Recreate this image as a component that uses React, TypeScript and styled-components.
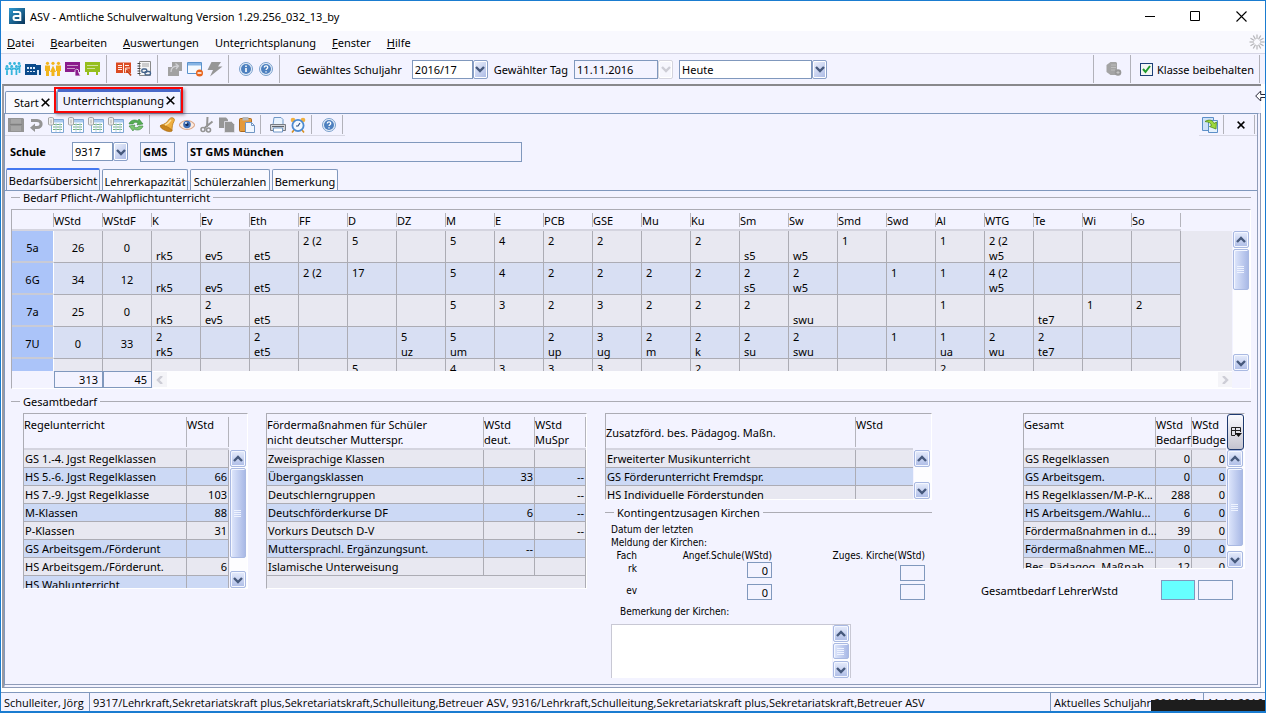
import React from 'react';
import styled, { createGlobalStyle, css } from 'styled-components';

const slate = '#8098bd';
const grid = '#acacb4';
const paper = '#f3f3ff';

const GlobalStyle = createGlobalStyle`
  *, *::before, *::after { box-sizing: border-box; }
  body { margin: 0; background: #fff; }
  body, button, input, select, textarea {
    font-family: "Noto Sans", "Open Sans", "Liberation Sans", sans-serif;
    font-size: 11px;
    color: #000;
  }
  button, input, select, textarea { margin: 0; padding: 0; border-radius: 0; }
  svg { display: block; flex: none; }
`;

/* ---------- window frame ---------- */

const Window = styled.div`
  position: relative;
  display: flex;
  flex-direction: column;
  min-height: 100vh;
  border: 1px solid #1a7cd0;
  border-bottom-width: 2px;
  background: #fff;
  line-height: 15px;
  white-space: nowrap;
  overflow: hidden;
`;

const TitleBar = styled.header`
  display: flex;
  align-items: center;
  height: 30px;
  padding: 0 16px 0 8px;
`;

const AppTitle = styled.h1`
  margin: 0 auto 0 5px;
  font-size: 11px;
  font-weight: 400;
`;

const WindowButton = styled.button`
  display: grid;
  place-items: center;
  width: 45px;
  height: 28px;
  border: 0;
  background: none;
  &:last-child { width: 16px; margin-left: 15px; }
`;

const MenuBar = styled.nav`
  display: flex;
  align-items: center;
  gap: 16px;
  height: 23px;
  padding: 0 0 0 6px;
  background: #f9f9fe;
  border-bottom: 1px solid #d6d6e6;
`;

const MenuItem = styled.a`
  color: #000;
  text-decoration: none;
`;

const Busy = styled.span`
  margin-left: auto;
`;

/* ---------- tool bars ---------- */

const Divider = styled.span<{ $tall?: boolean }>`
  width: 1px;
  height: ${p => (p.$tall ? 28 : 19)}px;
  margin: 0 7px 0 3px;
  background: #b2b2ba;
  &:last-child { margin-right: 2px; }
`;

const ToolBar = styled.div`
  display: flex;
  align-items: center;
  height: 30px;
  padding: 0 3px 0 2px;
  background: ${paper};
`;

const PageBar = styled.div`
  display: flex;
  justify-content: space-between;
`;

const PageTools = styled.div`
  display: flex;
  align-items: center;
  height: 22px;
  padding: 0 0 0 1px;
  border-bottom: 1px solid #d8d8e4;
`;

const ToolButton = styled.button<{ $wide?: boolean }>`
  display: grid;
  place-items: center;
  width: ${p => (p.$wide ? 26 : 20)}px;
  height: 20px;
  border: 0;
  background: none;
`;

const Push = styled.span`
  flex: 1;
`;

const FieldLabel = styled.label<{ $lead?: boolean }>`
  margin: 0 ${p => (p.$lead ? 10 : 6)}px;
`;

const Combo = styled.span<{ $w: number; $gap?: number }>`
  display: flex;
  width: ${p => p.$w}px;
  height: 19px;
  margin-right: ${p => p.$gap ?? 0}px;
`;

const ComboSelect = styled.select`
  flex: 1;
  min-width: 0;
  appearance: none;
  padding: 0 2px;
  border: 1px solid ${slate};
  background: #fff;
`;

const ComboInput = styled.input`
  flex: 1;
  min-width: 0;
  padding: 0 2px;
  border: 1px solid ${slate};
  background: ${paper};
`;

const ComboArrow = styled.button<{ $off?: boolean }>`
  display: grid;
  place-items: center;
  width: 15px;
  border: 1px solid ${p => (p.$off ? '#d4d4de' : '#8aa0c8')};
  border-radius: 2px;
  background: ${p => (p.$off ? '#f6f6fd' : 'linear-gradient(135deg, #eef2fd, #a9b8e4)')};
  box-shadow: inset 0 0 0 1px #fff;
`;

const CheckLabel = styled.label`
  display: flex;
  align-items: center;
  gap: 4px;
  padding: 0 2px;
`;

const CheckBox = styled.input`
  appearance: none;
  width: 13px;
  height: 13px;
  border: 1px solid #1c3f78;
  background: #f4f6f4;
  &:not(:checked) + svg { display: none; }
`;

const CheckHolder = styled.span`
  position: relative;
  display: flex;
  svg { position: absolute; left: 2px; top: 2px; pointer-events: none; }
`;

/* ---------- workspace and tabs ---------- */

const Workspace = styled.main`
  flex: 1;
  display: flex;
  flex-direction: column;
  margin: 0 4px 4px 1px;
  border-top: 2px solid #88888c;
  border-left: 2px solid #9a9aa2;
  background: ${paper};
`;

const DocTabs = styled.div`
  display: flex;
  align-items: flex-end;
  height: 27px;
  padding-left: 1px;
`;

const DocTab = styled.div<{ $active?: boolean }>`
  position: relative;
  display: flex;
  align-items: center;
  gap: 2px;
  height: ${p => (p.$active ? 24 : 22)}px;
  padding: 0 ${p => (p.$active ? 4 : 5)}px ${p => (p.$active ? 4 : 0)}px ${p => (p.$active ? 5 : 8)}px;
  border: 1px solid ${slate};
  border-top: ${p => (p.$active ? '3px solid #4a68c8' : `1px solid ${slate}`)};
  border-bottom: 0;
  border-radius: 2px 2px 0 0;
  background: ${p => (p.$active ? paper : '#fafaff')};
`;

const Marker = styled.span`
  position: absolute;
  inset: -5px -3px 0 -4px;
  border: 2px solid #f80404;
  box-shadow: 2px 2px 3px rgba(90, 60, 80, 0.5);
  pointer-events: none;
`;

const CloseButton = styled.button`
  display: grid;
  place-items: center;
  width: 10px;
  height: 12px;
  border: 0;
  background: none;
`;

const Page = styled.section`
  flex: 1;
  border: 1px solid ${slate};
  border-right: 4px double #8e9bb8;
  border-bottom: 4px double #8e9bb8;
`;

const SchoolRow = styled.div`
  display: flex;
  align-items: center;
  height: 31px;
  padding-left: 5px;
`;

const SchoolLabel = styled.label`
  width: 62px;
  font-weight: 700;
`;

const SchoolField = styled.input<{ $w: number }>`
  width: ${p => p.$w}px;
  height: 20px;
  margin-left: 12px;
  padding: 0 2px;
  border: 1px solid ${slate};
  background: ${paper};
  font-weight: 700;
`;

const TabRow = styled.div`
  display: flex;
  align-items: flex-end;
  gap: 2px;
  height: 24px;
  padding-left: 1px;
  border-bottom: 1px solid ${slate};
`;

const TabButton = styled.button<{ $active?: boolean; $w: number }>`
  width: ${p => p.$w}px;
  height: ${p => (p.$active ? 22 : 21)}px;
  padding-top: ${p => (p.$active ? 0 : 2)}px;
  border: 1px solid ${slate};
  border-bottom: 0;
  border-radius: 2px 2px 0 0;
  background: #fafaff;
  line-height: 15px;
  ${p => p.$active && css`
    border-top: 2px solid #4478f0;
    background: ${paper};
  `}
`;

/* ---------- groups ---------- */

const GroupTitle = styled.h2<{ $inner?: boolean }>`
  display: flex;
  align-items: center;
  gap: 3px;
  height: 13px;
  margin: 0 ${p => (p.$inner ? '0 4px' : '6px 5px')};
  font-size: 11px;
  font-weight: 400;
  line-height: 13px;
  &::before { content: ''; width: 9px; border-top: 1px solid ${grid}; }
  &::after { content: ''; flex: 1; border-top: 1px solid ${grid}; }
`;

/* ---------- scroll bars ---------- */

const ScrollColumn = styled.div<{ $top: number }>`
  flex: 1;
  display: flex;
  flex-direction: column;
  width: 17px;
  margin-top: ${p => p.$top}px;
  background: #fdfdff;
`;

const ScrollArrow = styled.button`
  display: grid;
  place-items: center;
  flex: none;
  width: 16px;
  height: 17px;
  border: 1px solid #a9b9e2;
  border-radius: 2px;
  background: linear-gradient(#e6ecfc, #adbce6);
  box-shadow: inset 0 0 0 1px #f4f7ff;
`;

const ScrollThumb = styled.div<{ $h: number }>`
  display: grid;
  place-items: center;
  width: 16px;
  height: ${p => p.$h}px;
  margin-top: 1px;
  border: 1px solid #a9b9e2;
  border-radius: 2px;
  background: linear-gradient(90deg, #dfe7fc, #a9b9e6);
  box-shadow: inset 1px 1px 0 #f4f7ff;
`;

const ScrollRow = styled.div`
  display: flex;
  justify-content: space-between;
  align-items: center;
  flex: 1;
  margin: 0 18px 0 1px;
  background: #fdfdff;
`;

const FlatArrow = styled.button`
  display: grid;
  place-items: center;
  width: 14px;
  height: 15px;
  border: 0;
  background: #f4f4f8;
`;

/* ---------- tables ---------- */

const Frame = styled.div<{ $w?: number; $h: number }>`
  display: flex;
  ${p => p.$w && css`width: ${p.$w}px;`}
  height: ${p => p.$h}px;
  border: 1px solid ${grid};
  border-right-color: #fff;
  border-bottom-color: #fff;
`;

const Clip = styled.div<{ $fill?: boolean }>`
  flex: 1;
  overflow: hidden;
  background: linear-gradient(${paper} 0 ${p => (p.$fill ? 21 : 36)}px, ${p => (p.$fill ? '#e8e8f1' : 'transparent')} 0);
`;

const Grid = styled.table`
  table-layout: fixed;
  width: 0;
  border-collapse: separate;
  border-spacing: 0;
`;

const HeadCell = styled.th<{ $w: number; $h: number }>`
  width: ${p => p.$w}px;
  height: ${p => p.$h}px;
  padding: 3px 0 0;
  border-bottom: 2px solid #d4d4df;
  background: ${paper};
  font-weight: 400;
  text-align: left;
  vertical-align: top;
`;

const HeadText = styled.span<{ $h: number; $mid?: boolean }>`
  display: block;
  height: ${p => p.$h}px;
  padding: ${p => (p.$mid ? 8 : 0)}px 0 0;
  border-right: 1px solid #b4b4bc;
  line-height: 15px;
  white-space: pre;
`;

const NeedRow = styled.tr`
  background: #e8e8f1;
  &:nth-child(even) { background: #d8dff3; }
`;

const ClassCell = styled.th`
  height: 32px;
  padding: 2px 0 0;
  border-right: 1px solid #fff;
  border-bottom: 2px solid #c9cbd6;
  background: #abc4f9;
  font-weight: 400;
  text-align: center;
`;

const NeedCell = styled.td<{ $sum?: boolean }>`
  height: 32px;
  padding: ${p => (p.$sum ? '2px 0 0' : '2px 0 0 4px')};
  border-right: 1px solid ${grid};
  border-bottom: 1px solid ${grid};
  text-align: ${p => (p.$sum ? 'center' : 'left')};
`;

const NeedText = styled.span`
  display: block;
  height: 29px;
  line-height: 15px;
  white-space: pre;
`;

const NeedFrame = styled.div`
  margin: 0 6px 6px;
  border: 1px solid ${grid};
  border-right-color: #fff;
  border-bottom-color: #fff;
`;

const NeedBody = styled.div`
  display: flex;
  height: 161px;
`;

const NeedFoot = styled.div`
  display: flex;
  height: 17px;
  padding-left: 42px;
`;

const SumField = styled.input`
  width: 49px;
  padding-right: 4px;
  border: 1px solid ${slate};
  background: ${paper};
  text-align: right;
`;

const ListRow = styled.tr<{ $blank?: boolean }>`
  background: #e8e8f1;
  ${p => !p.$blank && css`&:nth-child(even) { background: #ccd9f5; }`}
`;

const ListCell = styled.td<{ $num?: boolean }>`
  height: 18px;
  padding: 0 ${p => (p.$num ? 1 : 0)}px 0 1px;
  border-right: 1px solid ${grid};
  border-bottom: 1px solid ${grid};
  line-height: 17px;
  text-align: ${p => (p.$num ? 'right' : 'left')};
`;

const Totals = styled.div`
  display: flex;
  align-items: flex-start;
  gap: 18px;
  padding: 0 12px 6px 18px;
`;

const TotalsColumn = styled.div<{ $end?: boolean }>`
  margin-left: ${p => (p.$end ? 'auto' : '0')};
  display: flex;
  flex-direction: column;
  align-items: ${p => (p.$end ? 'flex-end' : 'stretch')};
`;

const ColumnButton = styled.button`
  display: grid;
  place-items: center;
  width: 17px;
  height: 36px;
  border: 1px solid #1f3a70;
  border-radius: 3px;
  background: linear-gradient(#fafafe, #c4c4d0);
`;

const ListSide = styled.div`
  display: flex;
  flex-direction: column;
  margin-left: 1px;
`;

/* ---------- church quota ---------- */

const Quota = styled.section`
  width: 327px;
  margin-top: 6px;
  font-family: "DejaVu Sans Condensed", "DejaVu Sans", sans-serif;
  font-size: 10px;
  line-height: 13px;
`;

const QuotaTitle = styled(GroupTitle)`
  font-family: "Noto Sans", "Open Sans", sans-serif;
`;

const QuotaNote = styled.p`
  margin: 0 0 0 6px;
`;

const QuotaGrid = styled.div`
  display: grid;
  grid-template-columns: 32px 135px 153px;
  grid-template-rows: 13px 22px 16px;
  justify-items: end;
  align-items: start;
`;

const QuotaField = styled.input<{ $low?: boolean }>`
  width: 25px;
  height: 16px;
  padding-right: 3px;
  border: 1px solid ${slate};
  background: ${paper};
  text-align: right;
  align-self: ${p => (p.$low ? 'center' : 'start')};
`;

const NoteLabel = styled.label`
  display: block;
  margin: 5px 0 6px 15px;
`;

const NoteBox = styled.div`
  display: flex;
  width: 240px;
  height: 54px;
  margin-left: 6px;
  border: 1px solid #c8c8d4;
  border-bottom: 0;
`;

const NoteText = styled.textarea`
  flex: 1;
  min-width: 0;
  border: 0;
  border-left: 1px solid #fff;
  background: #fff;
  resize: none;
  outline: none;
  overflow: hidden;
`;

const SumRow = styled.div`
  display: flex;
  align-items: center;
  gap: 3px;
  margin: 11px 12px 0 0;
  label { margin-right: 40px; }
`;

const SumBox = styled.input<{ $hot?: boolean }>`
  width: ${p => (p.$hot ? 34 : 35)}px;
  height: 20px;
  border: 1px solid ${slate};
  background: ${p => (p.$hot ? '#66ffff' : paper)};
`;

/* ---------- status bar ---------- */

const StatusBar = styled.footer`
  display: flex;
  height: 19px;
  border-top: 1px solid ${slate};
  background: ${paper};
  font-family: "Open Sans", "Noto Sans", sans-serif;
`;

const StatusCell = styled.span<{ $w?: number }>`
  ${p => (p.$w ? css`width: ${p.$w}px;` : css`flex: 1; min-width: 0;`)}
  padding: 2px 0 0 3px;
  border-right: 1px solid ${slate};
  overflow: hidden;
  &:last-child { border-right: 0; }
`;

const Cover = styled.div`
  position: absolute;
  right: -1px;
  bottom: -2px;
  width: 115px;
  height: 13px;
  background: #1d1d1d;
`;

const Pointer = styled.span`
  position: absolute;
  right: -1px;
  top: 89px;
`;

/* ---------- drawings ---------- */

const Svg = ({ children, w = 16, h = 16 }: { children: React.ReactNode; w?: number; h?: number }) => (
  <svg width={w} height={h} viewBox={`0 0 ${w} ${h}`} fill="none" aria-hidden="true">{children}</svg>
);

const Logo = () => (
  <Svg>
    <defs>
      <linearGradient id="logo" x1="0" x2="1" y1="0" y2="1"><stop stopColor="#2e9ad2" /><stop offset="1" stopColor="#0a3558" /></linearGradient>
    </defs>
    <rect width="16" height="16" fill="url(#logo)" />
    <path d="M4 4h5.500c1.200 0 1.800.600 1.800 1.800V12H6.500C5 12 4.500 11.300 4.500 10s.6-2 2-2h5" stroke="#fff" strokeWidth="2" />
  </Svg>
);

const Chevron = ({ dir, off }: { dir: 'up' | 'down' | 'left' | 'right'; off?: boolean }) => {
  const d = { up: 'M1 6l4-4 4 4', down: 'M1 2l4 4 4-4', left: 'M7 0L3 4l4 4', right: 'M3 0l4 4-4 4' }[dir];
  return <Svg w={10} h={8}><path d={d} stroke={off ? '#cdcdd6' : '#46597c'} strokeWidth="2.400" /></Svg>;
};

const Grip = () => (
  <Svg w={8} h={9}><path d="M0 1.500h7M0 3.500h7M0 5.500h7M0 7.500h7" stroke="#eef3ff" /></Svg>
);

const Cross = ({ s = 9 }: { s?: number }) => (
  <svg width={s} height={s} viewBox="0 0 9 9" aria-hidden="true"><path d="M.7.7l7.600 7.600M8.300.7L.7 8.300" stroke="#000" strokeWidth="1.600" /></svg>
);

const Pupils = () => (
  <Svg>
    <g fill="#35b4dc">
      <circle cx="5" cy="2.500" r="1.400" /><circle cx="9.500" cy="2.500" r="1.400" /><circle cx="14" cy="2.500" r="1.400" />
      <circle cx="2" cy="5.500" r="1.400" /><circle cx="6.700" cy="5.500" r="1.400" /><circle cx="11.400" cy="5.500" r="1.400" />
    </g>
    <path d="M0 7l2 2 2-2M4.700 7l2 2 2-2M9.400 7l2 2 2-2M2 8v6M6.700 8v6M11.400 8v6M13 5l1.500 1 1.500-2M14.500 6v6" stroke="#35b4dc" strokeWidth="1.800" />
  </Svg>
);

const SchoolIcon = () => (
  <Svg>
    <path d="M0 3h11v1h5v10H0z" fill="#0b4a8c" />
    <path d="M2 6h2v2H2zM5 6h2v2H5zM8 6h2v2H8zM2 10h2v1H2zM5 10h2v1H5zM8 10h2v1H8zM12 9h2v5h-2z" fill="#dbe9f8" />
  </Svg>
);

const Parents = () => (
  <Svg>
    <g fill="#f2b51c">
      <circle cx="2.500" cy="2.300" r="1.600" /><circle cx="8" cy="2.300" r="1.600" /><circle cx="13.500" cy="2.300" r="1.600" />
      <path d="M0 4.500h5V10H4v5H1v-5H0zM8 4.500l3 6.500H9.500v4h-3v-4H5zM11 4.500h5V10h-1v5h-3v-5h-1z" />
    </g>
  </Svg>
);

const Board = ({ color, pen }: { color: string; pen?: boolean }) => (
  <Svg>
    <path d="M0 1h15v10H0z" fill={color} />
    <path d="M2 4.500h11M2 7.500h8" stroke="#fff" strokeOpacity=".55" />
    {pen ? <path d="M10 9.500l1.500-1.500 2 1v2l2 4h-5.500z" fill={color} stroke="#f3f3ff" strokeWidth=".8" /> : <path d="M3 11v3M12 11v3" stroke={color} strokeWidth="2" />}
  </Svg>
);

const Book = () => (
  <Svg>
    <path d="M0 1.500h15v10.500H0z" fill="#dc4a22" />
    <path d="M7.500 2v10M2 4.500h4M2 6.500h4M2 8.500h4M9 4.500h4" stroke="#fff" strokeWidth=".9" />
    <path d="M9.500 7v4.500M9.500 7H14M9.500 7l6 7" stroke="#f8d8cc" />
    <path d="M11 9.500l4 5" stroke="#c23c14" strokeWidth="1.500" />
  </Svg>
);

const Notebook = () => (
  <Svg>
    <path d="M3.500.500h11v14h-11z" fill="#f6f6f6" stroke="#8a8a8a" />
    <path d="M1.500 2.500h3M1.500 5h3M1.500 7.500h3M1.500 10h3M1.500 12.500h3" stroke="#444" />
    <path d="M6 3h7M6 5h7" stroke="#a4a4a4" />
    <rect x="5.800" y="8" width="5" height="3.400" rx="1.500" stroke="#44648c" strokeWidth="1.400" /><rect x="9" y="10.500" width="5.500" height="3.400" rx="1.500" stroke="#44648c" strokeWidth="1.400" />
  </Svg>
);

const GrayCopy = () => (
  <Svg>
    <path d="M5 1h10v9h-3v5H1V6h4z" fill="#a2a2a2" />
    <path d="M4 11c0-4 3-6 7-6M8.500 2.500l3 2.500-2.500 3" stroke="#d0d0d4" strokeWidth="1.300" />
  </Svg>
);

const WindowMinus = () => (
  <Svg>
    <path d="M.500 1.500h14v11H.500z" fill="#f4f9ff" stroke="#5b92cc" />
    <path d="M1 2h13v2.500H1z" fill="#86b4e4" />
    <circle cx="12.500" cy="12" r="3.500" fill="#e8641c" /><path d="M10.500 12h4" stroke="#fff" strokeWidth="1.500" />
  </Svg>
);

const Bolt = () => <Svg><path d="M4.500 1H14l-3 4.500h4.500L3 15.500 6 9H.500z" fill="#969696" /></Svg>;

const Round = ({ children }: { children: React.ReactNode }) => (
  <Svg>
    <circle cx="8" cy="8" r="6.500" fill="#e8f0fa" stroke="#7aa0cc" />
    <circle cx="8" cy="8" r="5" fill="#4d80bf" />
    {children}
  </Svg>
);
const Info = () => <Round><path d="M8 7v4M8 4.500v1.500" stroke="#fff" strokeWidth="1.600" /></Round>;
const Help = () => <Round><path d="M6.300 6.600c0-2.400 3.600-2.200 3.400 0-.1 1-1.700 1.200-1.700 2.400M8 10.200v1.200" stroke="#fff" strokeWidth="1.300" /></Round>;

const ServerIcon = () => (
  <Svg>
    <path d="M.500 4l4-3H10l1 1v12H4.500l-4-3z" fill="#a4a4a4" />
    <path d="M5 4h5M5 6.500h5M5 9h4" stroke="#bdbdbd" /><circle cx="12" cy="11.500" r="3.300" fill="#989898" /><path d="M10.500 11.500h3M12 10v3" stroke="#c4c4c4" />
  </Svg>
);

const Save = () => <Svg><path d="M0 1h15l1 1v13H0z" fill="#949494" /><path d="M3 2h10v4.500H3zM3 9h10v5H3z" fill="#a6a6a6" /><path d="M2 7.500h12" stroke="#808080" /></Svg>;
const Undo = () => <Svg><path d="M3 3.500h6c5.500 0 5.500 7 0 7H6" stroke="#949494" strokeWidth="3" /><path d="M7 6.500v8.500l-5-4.200z" fill="#949494" /></Svg>;
const Sheet = () => (
  <Svg>
    <path d="M3.500 2.500h12v13h-12z" fill="#fff" stroke="#7ea6d4" />
    <path d="M4 3h11v2.500H4z" fill="#a8c8ec" />
    <path d="M5 7.500h9M5 10h9M5 12.500h9" stroke="#6fae78" /><path d="M8 6v9M12 6v9" stroke="#b6d0ea" />
    <path d="M.500 1c1.500-.8 3.500-.8 5 0v6.500c-1.500.8-3.500.8-5 0z" fill="#f0f0f0" stroke="#a6a6a6" /><path d="M3 2.500v4" stroke="#aaa" />
  </Svg>
);
const Refresh = () => (
  <Svg>
    <path d="M1 7c1-4 6-5 9-3l1-2 4 5-6 1 1-2c-2-1-4-1-5 1z" fill="#55ad52" stroke="#35843a" strokeWidth=".6" />
    <path d="M15 9c-1 4-6 5-9 3l-1 2-4-5 6-1-1 2c2 1 4 1 5-1z" fill="#7cc670" stroke="#35843a" strokeWidth=".6" />
  </Svg>
);
const Bell = () => (
  <Svg>
    <path d="M13.500.800c2 .5 2.500 2 1.300 4C13.500 7 13 10 13 14L1.500 8.500C6 7 8 5.500 9.500 3c1-1.600 2.500-2.600 4-2.200z" fill="#f0b040" stroke="#b87818" strokeWidth=".8" />
    <path d="M1.500 8.500C-.500 11 10 16.500 13 14c.5-2.500-9.500-7-11.500-5.500z" fill="#c8841c" stroke="#a86a14" strokeWidth=".6" /><path d="M6 8c3-1 4.500-3 6-5" stroke="#fde6a8" strokeWidth="1.300" />
  </Svg>
);
const Eye = () => (
  <Svg>
    <path d="M0 8c4-6 12-6 16 0-4 6-12 6-16 0z" fill="#fbece2" stroke="#dca98c" strokeWidth="1.200" />
    <circle cx="8" cy="7.500" r="3.800" fill="#3f6fb8" /><circle cx="8" cy="7.500" r="1.600" fill="#142c58" /><circle cx="7" cy="6" r=".9" fill="#fff" />
  </Svg>
);
const Scissors = () => (
  <Svg><path d="M8.500 0L8 10M13.500 4.500L5.500 11" stroke="#949494" strokeWidth="2" /><circle cx="4" cy="12.500" r="2" stroke="#949494" strokeWidth="1.600" /><circle cx="9.500" cy="13" r="2" stroke="#949494" strokeWidth="1.600" /></Svg>
);
const Copy = () => <Svg><path d="M0 .500h7l2 2V11H0z" fill="#969696" /><path d="M5.500 4.500h7l3 3v8h-10z" fill="#969696" stroke="#e4e4ee" strokeWidth=".8" /></Svg>;
const Paste = () => (
  <Svg>
    <rect x=".5" y="1.500" width="12" height="13" rx="1" fill="#e49a3a" stroke="#ad6a1c" /><path d="M3.500 0h6v3.500h-6z" fill="#b8b8b8" />
    <path d="M6.500 5.500h6l3 3v7h-9z" fill="#f1f7ff" stroke="#7096c4" /><path d="M12.500 5.500v3h3" stroke="#7096c4" />
  </Svg>
);
const Printer = () => (
  <Svg>
    <path d="M4 .500h7l2 2V8H3z" fill="#e8f2fe" stroke="#6f97c6" />
    <path d="M.500 7.500h15v6H.500z" fill="#d2d5da" stroke="#787c84" /><path d="M3.500 11h9v4h-9z" fill="#fff" stroke="#6f97c6" /><path d="M2 9.500h12" stroke="#5c6068" />
  </Svg>
);
const Clock = () => (
  <Svg>
    <circle cx="3" cy="3" r="2.300" fill="#f0b040" /><circle cx="13" cy="3" r="2.300" fill="#f0b040" />
    <path d="M4 13l-2 2.500M12 13l2 2.500" stroke="#d89020" strokeWidth="1.600" />
    <circle cx="8" cy="8.500" r="5.600" fill="#f3f9ff" stroke="#4c8ad0" strokeWidth="1.800" /><path d="M10 6L8 9h-2" stroke="#2c4f80" strokeWidth="1.200" />
  </Svg>
);
const Export = () => (
  <Svg>
    <path d="M.500.500h11v13H.500z" fill="#cfe2f8" stroke="#5c8fc8" /><path d="M6.500 3.500h9v12h-9z" fill="#e4f0fc" stroke="#5c8fc8" />
    <path d="M3 4.500c4-2.500 8-1.500 9 2l2.500-1.500-.5 7-6.500-2.500 2-1C9 6 7 5 3 4.500z" fill="#9ed83c" stroke="#4f8a1c" strokeWidth=".8" />
  </Svg>
);

/* ---------- data ---------- */

const subjects = ['K', 'Ev', 'Eth', 'FF', 'D', 'DZ', 'M', 'E', 'PCB', 'GSE', 'Mu', 'Ku', 'Sm', 'Sw', 'Smd', 'Swd', 'Al', 'WTG', 'Te', 'Wi', 'So'];

type Need = { name: string; std: string; stdF: string; cells: Record<string, string> };
const needs: Need[] = [
  { name: '5a', std: '26', stdF: '0', cells: { K: '/rk5', Ev: '/ev5', Eth: '/et5', FF: '2 (2', D: '5', M: '5', E: '4', PCB: '2', GSE: '2', Ku: '2', Sm: '/s5', Sw: '/w5', Smd: '1', Al: '1', WTG: '2 (2/w5' } },
  { name: '6G', std: '34', stdF: '12', cells: { K: '/rk5', Ev: '/ev5', Eth: '/et5', FF: '2 (2', D: '17', M: '5', E: '4', PCB: '2', GSE: '2', Mu: '2', Ku: '2', Sm: '2/s5', Sw: '2/w5', Swd: '1', Al: '1', WTG: '4 (2/w5' } },
  { name: '7a', std: '25', stdF: '0', cells: { K: '/rk5', Ev: '2/ev5', Eth: '/et5', M: '5', E: '3', PCB: '2', GSE: '3', Mu: '2', Ku: '2', Sm: '2', Sw: '/swu', Al: '1', Te: '/te7', Wi: '1', So: '2' } },
  { name: '7U', std: '0', stdF: '33', cells: { K: '2/rk5', Eth: '2/et5', DZ: '5/uz', M: '5/um', PCB: '2/up', GSE: '3/ug', Mu: '2/m', Ku: '2/k', Sm: '2/su', Sw: '2/swu', Swd: '1', Al: '1/ua', WTG: '2/wu', Te: '2/te7' } },
  { name: '', std: '', stdF: '', cells: { D: '5', M: '4', E: '3', PCB: '3', GSE: '3', Ku: '2', Al: '2' } },
];

type ListDef = { w: number; h: number; cols: [string, number][]; rows: string[][]; thumb?: number; scroll?: boolean; picker?: boolean; mid?: boolean };

const regular: ListDef = {
  w: 225, h: 176, scroll: true, thumb: 90,
  cols: [['Regelunterricht', 163], ['WStd', 42]],
  rows: [['GS 1.-4. Jgst Regelklassen', ''], ['HS 5.-6. Jgst Regelklassen', '66'], ['HS 7.-9. Jgst Regelklasse', '103'], ['M-Klassen', '88'], ['P-Klassen', '31'], ['GS Arbeitsgem./Förderunt', ''], ['HS Arbeitsgem./Förderunt.', '6'], ['HS Wahlunterricht', '']],
};
const support: ListDef = {
  w: 321, h: 176,
  cols: [['Fördermaßnahmen für Schüler\nnicht deutscher Mutterspr.', 217], ['WStd\ndeut.', 51], ['WStd\nMuSpr', 51]],
  rows: [['Zweisprachige Klassen', '', ''], ['Übergangsklassen', '33', '--'], ['Deutschlerngruppen', '', '--'], ['Deutschförderkurse DF', '6', '--'], ['Vorkurs Deutsch D-V', '', '--'], ['Muttersprachl. Ergänzungsunt.', '--', ''], ['Islamische Unterweisung', '', '']],
};
const extra: ListDef = {
  w: 327, h: 87, scroll: true, mid: true,
  cols: [['Zusatzförd. bes. Pädagog. Maßn.', 250], ['WStd', 58]],
  rows: [['Erweiterter Musikunterricht', ''], ['GS Förderunterricht Fremdspr.', ''], ['HS Individuelle Förderstunden', '']],
};
const total: ListDef = {
  w: 222, h: 156, scroll: true, picker: true, thumb: 78,
  cols: [['Gesamt', 132], ['WStd\nBedarf', 36], ['WStd\nBudge', 35]],
  rows: [['GS Regelklassen', '0', '0'], ['GS Arbeitsgem.', '0', '0'], ['HS Regelklassen/M-P-K...', '288', '0'], ['HS Arbeitsgem./Wahlu...', '6', '0'], ['Fördermaßnahmen in d...', '39', '0'], ['Fördermaßnahmen ME...', '0', '0'], ['Bes. Pädagog. Maßnah...', '12', '0']],
};

/* ---------- composed parts ---------- */

const Scroll = ({ top = 0, thumb }: { top?: number; thumb?: number }) => (
  <ScrollColumn $top={top}>
    <ScrollArrow aria-label="Nach oben"><Chevron dir="up" /></ScrollArrow>
    {thumb && <ScrollThumb $h={thumb}><Grip /></ScrollThumb>}
    <Push />
    <ScrollArrow aria-label="Nach unten"><Chevron dir="down" /></ScrollArrow>
  </ScrollColumn>
);

const List = ({ def }: { def: ListDef }) => (
  <Frame $w={def.w} $h={def.h}>
    <Clip>
      <Grid>
        <thead>
          <tr>
            {def.cols.map(([text, w], i) => (
              <HeadCell key={text} $w={w} $h={36} scope="col"><HeadText $h={30} $mid={def.mid && i === 0}>{text}</HeadText></HeadCell>
            ))}
          </tr>
        </thead>
        <tbody>
          {def.rows.map(row => (
            <ListRow key={row[0]}>{row.map((v, i) => <ListCell key={i} $num={i > 0}>{v}</ListCell>)}</ListRow>
          ))}
          {!def.scroll && <ListRow $blank><ListCell colSpan={3} /></ListRow>}
        </tbody>
      </Grid>
    </Clip>
    {def.scroll && (
      <ListSide>
        {def.picker && <ColumnButton aria-label="Spalten"><Svg w={12} h={12}><path d="M5 9.500H1.500v-8h9V6M1 4.500h9M5.500 1v8" stroke="#222" /><path d="M5 7h7l-3.500 4z" fill="#111" /></Svg></ColumnButton>}
        <Scroll top={def.picker ? 0 : 36} thumb={def.thumb} />
      </ListSide>
    )}
  </Frame>
);

const NeedTable = () => (
  <NeedFrame>
    <NeedBody>
      <Clip $fill>
        <Grid>
          <thead>
            <tr>
              <HeadCell $w={42} $h={21}><HeadText $h={14} /></HeadCell>
              {['WStd', 'WStdF', ...subjects].map(s => (
                <HeadCell key={s} $w={49} $h={21} scope="col"><HeadText $h={14}>{s}</HeadText></HeadCell>
              ))}
            </tr>
          </thead>
          <tbody>
            {needs.map(n => (
              <NeedRow key={n.name}>
                <ClassCell scope="row">{n.name}</ClassCell>
                <NeedCell $sum>{n.std}</NeedCell>
                <NeedCell $sum>{n.stdF}</NeedCell>
                {subjects.map(s => {
                  const [hours, group] = (n.cells[s] ?? '').split('/');
                  return <NeedCell key={s}><NeedText>{group ? `${hours}\n${group}` : hours}</NeedText></NeedCell>;
                })}
              </NeedRow>
            ))}
          </tbody>
        </Grid>
      </Clip>
      <ListSide><Scroll top={21} thumb={41} /></ListSide>
    </NeedBody>
    <NeedFoot>
      <SumField aria-label="Summe WStd" defaultValue="313" />
      <SumField aria-label="Summe WStdF" defaultValue="45" />
      <ScrollRow>
        <FlatArrow aria-label="Nach links"><Chevron dir="left" off /></FlatArrow>
        <FlatArrow aria-label="Nach rechts"><Chevron dir="right" off /></FlatArrow>
      </ScrollRow>
    </NeedFoot>
  </NeedFrame>
);

const tools = (items: [string, React.ReactNode][]) =>
  items.map(([name, icon]) => <ToolButton key={name} aria-label={name}>{icon}</ToolButton>);

export default function App() {
  return (
    <>
      <GlobalStyle />
      <Window>
        <TitleBar>
          <Logo />
          <AppTitle>ASV - Amtliche Schulverwaltung Version 1.29.256_032_13_by</AppTitle>
          <WindowButton aria-label="Minimieren"><Svg w={11} h={11}><path d="M0 5.500h10" stroke="#000" /></Svg></WindowButton>
          <WindowButton aria-label="Maximieren"><Svg w={11} h={11}><path d="M.500.500h9v9h-9z" stroke="#000" /></Svg></WindowButton>
          <WindowButton aria-label="Schließen"><Svg w={11} h={11}><path d="M.500.500l10 10M10.500.500l-10 10" stroke="#000" strokeWidth="1.100" /></Svg></WindowButton>
        </TitleBar>

        <MenuBar>
          <MenuItem href="#"><u>D</u>atei</MenuItem>
          <MenuItem href="#"><u>B</u>earbeiten</MenuItem>
          <MenuItem href="#"><u>A</u>uswertungen</MenuItem>
          <MenuItem href="#">Unte<u>r</u>richtsplanung</MenuItem>
          <MenuItem href="#"><u>F</u>enster</MenuItem>
          <MenuItem href="#"><u>H</u>ilfe</MenuItem>
          <Busy>
            <Svg>
              <g stroke="#b4b4b8" strokeWidth="1.200">
                {[0, 30, 60, 90, 120, 150, 180, 210, 240, 270, 300, 330].map(a => <path key={a} d="M8 .5v4.500" transform={`rotate(${a} 8 8)`} />)}
              </g>
            </Svg>
          </Busy>
        </MenuBar>

        <ToolBar>
          {tools([['Schüler', <Pupils />], ['Schulen', <SchoolIcon />], ['Lehrkräfte', <Parents />], ['Klassen', <Board color="#8a1c8c" pen />], ['Unterricht', <Board color="#96be1e" />]])}
          <Divider $tall />
          {tools([['Berichte', <Book />], ['Verzeichnis', <Notebook />]])}
          <Divider $tall />
          {tools([['Übernehmen', <GrayCopy />], ['Fenster schließen', <WindowMinus />], ['Ausführen', <Bolt />]])}
          <Divider $tall />
          {tools([['Info', <Info />], ['Hilfe', <Help />]])}
          <Divider $tall />
          <FieldLabel $lead htmlFor="year">Gewähltes Schuljahr</FieldLabel>
          <Combo $w={76}>
            <ComboSelect id="year"><option>2016/17</option></ComboSelect>
            <ComboArrow tabIndex={-1} aria-label="Schuljahr öffnen"><Chevron dir="down" /></ComboArrow>
          </Combo>
          <FieldLabel htmlFor="day">Gewählter Tag</FieldLabel>
          <Combo $w={99} $gap={6}>
            <ComboInput id="day" defaultValue="11.11.2016" />
            <ComboArrow $off tabIndex={-1} aria-label="Tag öffnen"><Chevron dir="down" off /></ComboArrow>
          </Combo>
          <Combo $w={148}>
            <ComboSelect aria-label="Zeitpunkt"><option>Heute</option></ComboSelect>
            <ComboArrow tabIndex={-1} aria-label="Zeitpunkt öffnen"><Chevron dir="down" /></ComboArrow>
          </Combo>
          <Push />
          <Divider $tall />
          <ToolButton $wide aria-label="Server"><ServerIcon /></ToolButton>
          <Divider $tall />
          <CheckLabel>
            <CheckHolder>
              <CheckBox type="checkbox" defaultChecked />
              <Svg w={9} h={9}><path d="M1 4l2.500 3L8 1" stroke="#1f9a2c" strokeWidth="2" /></Svg>
            </CheckHolder>
            Klasse beibehalten
          </CheckLabel>
          <Divider $tall />
        </ToolBar>

        <Workspace>
          <DocTabs>
            <DocTab>Start<CloseButton aria-label="Start schließen"><Cross /></CloseButton></DocTab>
            <DocTab $active>Unterrichtsplanung<CloseButton aria-label="Unterrichtsplanung schließen"><Cross /></CloseButton><Marker /></DocTab>
          </DocTabs>

          <Page>
            <PageBar>
              <PageTools>
                {tools([['Speichern', <Save />], ['Rückgängig', <Undo />], ['Tabelle 1', <Sheet />], ['Tabelle 2', <Sheet />], ['Tabelle 3', <Sheet />], ['Tabelle 4', <Sheet />], ['Aktualisieren', <Refresh />]])}
                <Divider />
                {tools([['Benachrichtigen', <Bell />], ['Ansehen', <Eye />], ['Ausschneiden', <Scissors />], ['Kopieren', <Copy />], ['Einfügen', <Paste />]])}
                <Divider />
                {tools([['Drucken', <Printer />], ['Termin', <Clock />]])}
                <Divider />
                {tools([['Hilfe zur Seite', <Help />]])}
                <Divider />
              </PageTools>
              <PageTools>
                {tools([['Exportieren', <Export />]])}
                <Divider />
                {tools([['Seite schließen', <Cross s={8} />]])}
                <Divider />
              </PageTools>
            </PageBar>

            <SchoolRow>
              <SchoolLabel htmlFor="school">Schule</SchoolLabel>
              <Combo $w={56}>
                <ComboSelect id="school"><option>9317</option></ComboSelect>
                <ComboArrow tabIndex={-1} aria-label="Schule öffnen"><Chevron dir="down" /></ComboArrow>
              </Combo>
              <SchoolField $w={35} aria-label="Schulart" defaultValue="GMS" />
              <SchoolField $w={335} aria-label="Schulname" defaultValue="ST GMS München" />
            </SchoolRow>

            <TabRow role="tablist">
              <TabButton role="tab" $active $w={94}>Bedarfsübersicht</TabButton>
              <TabButton role="tab" $w={86}>Lehrerkapazität</TabButton>
              <TabButton role="tab" $w={80}>Schülerzahlen</TabButton>
              <TabButton role="tab" $w={66}>Bemerkung</TabButton>
            </TabRow>

            <GroupTitle>Bedarf Pflicht-/Wahlpflichtunterricht</GroupTitle>
            <NeedTable />
            <GroupTitle>Gesamtbedarf</GroupTitle>

            <Totals>
              <List def={regular} />
              <List def={support} />
              <TotalsColumn>
                <List def={extra} />
                <Quota>
                  <QuotaTitle $inner>Kontingentzusagen Kirchen</QuotaTitle>
                  <QuotaNote>Datum der letzten<br />Meldung der Kirchen:</QuotaNote>
                  <QuotaGrid>
                    <span>Fach</span><span>Angef.Schule(WStd)</span><span>Zuges. Kirche(WStd)</span>
                    <span>rk</span><QuotaField aria-label="rk Schule" defaultValue="0" /><QuotaField $low aria-label="rk Kirche" />
                    <span>ev</span><QuotaField aria-label="ev Schule" defaultValue="0" /><QuotaField aria-label="ev Kirche" />
                  </QuotaGrid>
                  <NoteLabel htmlFor="note">Bemerkung der Kirchen:</NoteLabel>
                  <NoteBox>
                    <NoteText id="note" autoFocus />
                    <ListSide><Scroll thumb={16} /></ListSide>
                  </NoteBox>
                </Quota>
              </TotalsColumn>
              <TotalsColumn $end>
                <List def={total} />
                <SumRow>
                  <label htmlFor="sum">Gesamtbedarf LehrerWstd</label>
                  <SumBox id="sum" $hot />
                  <SumBox aria-label="Budget LehrerWstd" />
                </SumRow>
              </TotalsColumn>
            </Totals>
          </Page>
        </Workspace>

        <StatusBar>
          <StatusCell $w={89}>Schulleiter, Jörg</StatusCell>
          <StatusCell>9317/Lehrkraft,Sekretariatskraft plus,Sekretariatskraft,Schulleitung,Betreuer ASV, 9316/Lehrkraft,Schulleitung,Sekretariatskraft plus,Sekretariatskraft,Betreuer ASV</StatusCell>
          <StatusCell $w={153}>Aktuelles Schuljahr 2016/17</StatusCell>
          <StatusCell $w={61}>11.11.2016</StatusCell>
        </StatusBar>
        <Pointer><Svg w={11} h={12}><path d="M.700 6l5-5v3.500h6v3h-6V11z" fill="#fff" stroke="#223" /></Svg></Pointer>
        <Cover />
      </Window>
    </>
  );
}
